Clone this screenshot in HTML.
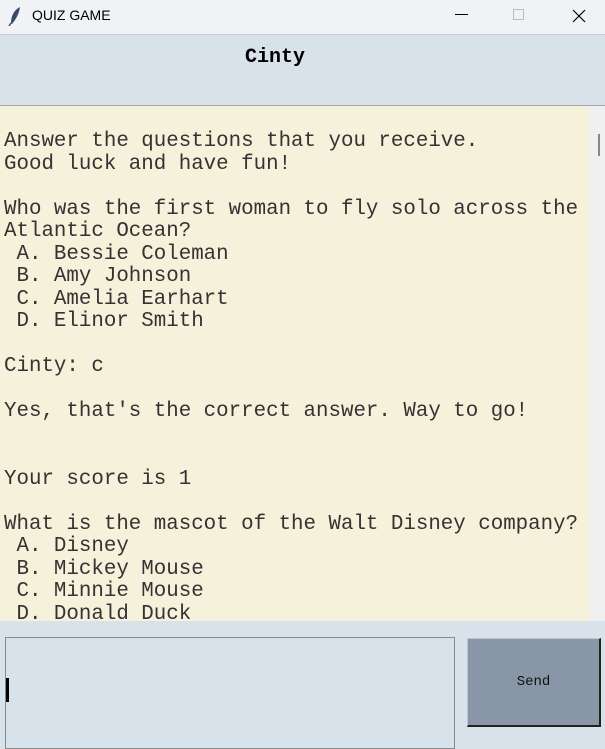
<!DOCTYPE html>
<html><head><style>
body{margin:0;width:605px;height:739px;overflow:hidden;background:#d8e2ea;position:relative;font-family:"Liberation Mono",monospace}
.tb{position:absolute;left:0;top:0;width:605px;height:34px;background:#f1f2f6;border-bottom:1px solid #c9cdd3}
.tb .t{position:absolute;left:32px;top:7px;font:14px "Liberation Sans",sans-serif;color:#000}
.hd{position:absolute;left:0;top:35px;width:605px;height:70px;background:#d8e2ea;border-bottom:1px solid #a9a9a9}
.hd .n{position:absolute;left:245px;top:11px;font-weight:bold;font-size:20px}
.txt{position:absolute;left:0;top:106px;width:589px;height:515px;background:#f5f1da;overflow:hidden}
.txt pre{margin:0;position:absolute;left:4px;top:25px;font-family:"Liberation Mono",monospace;font-size:20.8px;line-height:22.5px;color:#333}
.sb{position:absolute;left:589px;top:106px;width:16px;height:515px;background:#f0f0f0}
.sb div{position:absolute;left:9px;top:28px;width:2px;height:22px;background:#888}
.en{position:absolute;left:5px;top:637px;width:448px;height:110px;border:1px solid #8a8a8a;background:#d8e2ea}
.en i{position:absolute;left:0;top:40px;width:3px;height:24px;background:#000}
.bt{position:absolute;left:467px;top:638px;width:131px;height:86px;background:#8896a8;border-right:2px solid #222;border-bottom:2px solid #222;border-top:1px solid #bcc5d0;border-left:1px solid #bcc5d0;text-align:center;line-height:86px;font-size:14px;color:#111}
</style></head><body>
<div class="tb">
<svg style="position:absolute;left:8px;top:6px" width="14" height="20"><path d="M12 1 C6 4 3 10 3 17 L4 18 C8 13 11 8 12 1Z" fill="#3a4a66"/><path d="M3 17 L1 20" stroke="#3a4a66" stroke-width="1.5"/></svg>
<span class="t">QUIZ GAME</span>
<svg style="position:absolute;left:455px;top:14px" width="14" height="2"><rect width="13" height="1" fill="#000"/></svg>
<svg style="position:absolute;left:513px;top:9px" width="12" height="12"><rect x=".5" y=".5" width="10" height="10" fill="none" stroke="#bbb"/></svg>
<svg style="position:absolute;left:572px;top:9px" width="14" height="14"><path d="M1 1L13 13M13 1L1 13" stroke="#000" stroke-width="1.2"/></svg>
</div>
<div class="hd"><span class="n">Cinty</span></div>
<div class="txt"><pre>Answer the questions that you receive.
Good luck and have fun!

Who was the first woman to fly solo across the
Atlantic Ocean?
 A. Bessie Coleman
 B. Amy Johnson
 C. Amelia Earhart
 D. Elinor Smith

Cinty: c

Yes, that's the correct answer. Way to go!


Your score is 1

What is the mascot of the Walt Disney company?
 A. Disney
 B. Mickey Mouse
 C. Minnie Mouse
 D. Donald Duck</pre></div>
<div class="sb"><div></div></div>
<div class="en"><i></i></div>
<div class="bt">Send</div>
</body></html>
